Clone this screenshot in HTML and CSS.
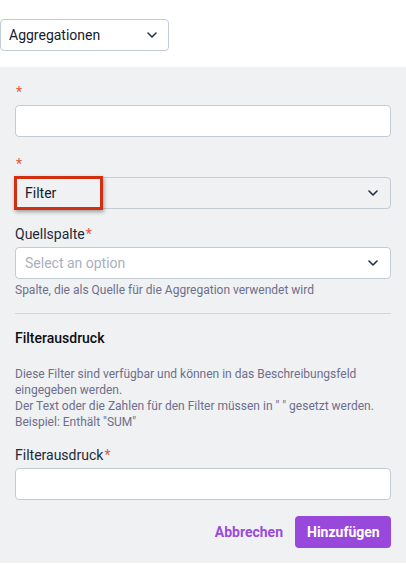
FILE: index.html
```html
<!DOCTYPE html>
<html lang="de">
<head>
<meta charset="utf-8">
<title>Aggregationen</title>
<link rel="stylesheet" href="styles.css">
</head>
<body>
<div class="topbar">
  <div class="select select-top">
    <span class="select-value">Aggregationen</span>
    <svg class="chev" width="10" height="6" viewBox="0 0 10 6"><polyline points="1,1 5,5 9,1" fill="none" stroke="#1d2f44" stroke-width="1.5" stroke-linecap="round" stroke-linejoin="round"/></svg>
  </div>
</div>

<div class="panel">
  <div class="field">
    <div class="label"><span class="req">*</span></div>
    <input class="input" type="text">
  </div>

  <div class="field field-2">
    <div class="label"><span class="req">*</span></div>
    <div class="select-wrap">
      <div class="select select-disabled">
        <span class="select-value">Filter</span>
        <svg class="chev" width="10" height="6" viewBox="0 0 10 6"><polyline points="1,1 5,5 9,1" fill="none" stroke="#1d2f44" stroke-width="1.6" stroke-linecap="round" stroke-linejoin="round"/></svg>
      </div>
      <div class="highlight"></div>
    </div>
  </div>

  <div class="field field-3">
    <div class="label">Quellspalte<span class="req">*</span></div>
    <div class="select select-white">
      <span class="select-placeholder">Select an option</span>
      <svg class="chev" width="10" height="6" viewBox="0 0 10 6"><polyline points="1,1 5,5 9,1" fill="none" stroke="#1d2f44" stroke-width="1.6" stroke-linecap="round" stroke-linejoin="round"/></svg>
    </div>
    <div class="help">Spalte, die als Quelle für die Aggregation verwendet wird</div>
  </div>

  <hr class="divider">

  <h3 class="heading">Filterausdruck</h3>
  <p class="desc">Diese Filter sind verfügbar und können in das Beschreibungsfeld eingegeben werden.<br>Der Text oder die Zahlen für den Filter müssen in " " gesetzt werden.<br>Beispiel: Enthält "SUM"</p>

  <div class="field field-4">
    <div class="label">Filterausdruck<span class="req">*</span></div>
    <input class="input" type="text">
  </div>

  <div class="actions">
    <button class="btn btn-text" type="button">Abbrechen</button>
    <button class="btn btn-primary" type="button">Hinzufügen</button>
  </div>
</div>
</body>
</html>
```

FILE: styles.css
```css
* { box-sizing: border-box; }

html, body {
  margin: 0;
  padding: 0;
  background: #ffffff;
  font-family: Roboto, "Liberation Sans", Arial, sans-serif;
  color: #1c2a3a;
}

.topbar {
  padding-top: 19px;
  padding-bottom: 16px;
}

.select {
  display: flex;
  align-items: center;
  justify-content: space-between;
  height: 32px;
  border: 1px solid #c3cbd5;
  border-radius: 4px;
  padding: 0 12px 0 8px;
  font-size: 14px;
}

.select-top {
  width: 169px;
  background: #fff;
  padding-left: 8px;
  padding-right: 11px;
  color: #111a24;
}

.select-value { color: #14202e; }
.select-placeholder { color: #a9b0bd; }

.chev { flex: none; display: block; }

.panel {
  background: #f0f1f3;
  padding: 15px 15px 15px 15px;
}

.field { display: flex; flex-direction: column; }
.field-2 { margin-top: 17px; }
.field-3 { margin-top: 15px; }
.field-4 { margin-top: 15px; }

.label {
  font-size: 14px;
  line-height: 20px;
  height: 20px;
  margin-bottom: 3px;
  color: #1c2a3a;
}

.req {
  color: #e4573f;
  margin-left: 1px;
}

.input {
  height: 32px;
  width: 100%;
  border: 1px solid #c3cbd5;
  border-radius: 4px;
  background: #fff;
  margin: 0;
  font: inherit;
  padding: 0 8px;
}

.select-wrap { position: relative; }

.select-disabled {
  background: transparent;
  padding-left: 9px;
}

.select-white {
  background: #fff;
  padding-left: 9px;
}

.highlight {
  position: absolute;
  left: -1px;
  top: -1px;
  width: 89px;
  height: 34px;
  border: 3px solid #d0300f;
  box-shadow: 1px 2px 4px rgba(0,0,0,0.35);
  pointer-events: none;
}

.help {
  margin-top: 3px;
  font-size: 12px;
  line-height: 16px;
  color: #6d6f8c;
}

.divider {
  margin: 15px 0 0 0;
  border: 0;
  border-top: 1px solid #d3d5db;
  height: 0;
}

.heading {
  margin: 14px 0 0 0;
  font-size: 14px;
  line-height: 20px;
  font-weight: 500;
  color: #0d0d12;
}

.desc {
  margin: 18px 0 0 0;
  font-size: 12px;
  line-height: 16px;
  color: #6d6f8c;
}

.actions {
  display: flex;
  justify-content: flex-end;
  align-items: center;
  margin-top: 16px;
}

.btn {
  font-family: inherit;
  font-size: 14px;
  font-weight: 700;
  height: 32px;
  border-radius: 4px;
  border: 0;
  cursor: pointer;
}

.btn-text {
  background: transparent;
  color: #9b4bdb;
  padding: 0 12px;
}

.btn-primary {
  background: #9848db;
  color: #fff;
  padding: 0 12px;
  width: 96px;
}
```
